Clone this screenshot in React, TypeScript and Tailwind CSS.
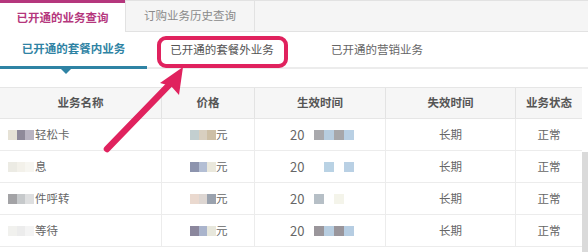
import React from 'react'

const font = { fontFamily: '"Noto Sans CJK SC", "Noto Sans", sans-serif' }

type Row = {
  name: string
  nameBlur: string[]
  priceBlur: string[]
  dateBlur: string[]
}

const rows: Row[] = [
  { name: '轻松卡', nameBlur: ['#e6e2d6', '#8f8a9a', '#b9b4c2'], priceBlur: ['#c3cfd0', '#d8cfc0', '#cdbfa6'], dateBlur: ['#a9a9ad', '#b7cde0', '#a7a7aa', '#b9d0e4'] },
  { name: '息', nameBlur: ['#ecebe4', '#f3f1ea', '#f7f6f1'], priceBlur: ['#8d94ae', '#b3bed4', '#eae8dc'], dateBlur: ['#ffffff', '#b9d2e4', '#ffffff', '#b9d0e4'] },
  { name: '件呼转', nameBlur: ['#a3a3a6', '#c6c9cb', '#dedfe0'], priceBlur: ['#ead9cf', '#ddd6d2', '#9aa2ae'], dateBlur: ['#b6bfc6', '#ffffff', '#f4f4ea', '#ffffff'] },
  { name: '等待', nameBlur: ['#f1f1ee', '#ececec', '#f4f4f4'], priceBlur: ['#8b879d', '#aab4cc', '#e7e7dc'], dateBlur: ['#9a969b', '#b7cde0', '#99959b', '#b6cde2'] },
]

function Blur({ colors, w }: { colors: string[]; w: number }) {
  return (
    <span className="inline-flex h-[10px] blur-[0.6px]" style={{ width: w }}>
      {colors.map((c, i) => (
        <span key={i} className="flex-1 h-full" style={{ background: c }} />
      ))}
    </span>
  )
}

export default function App() {
  return (
    <div className="relative w-[588px] h-[252px] overflow-hidden bg-white text-[11.5px]" style={font}>
      {/* Top tabs */}
      <div className="flex h-[32px] bg-[#f5f5f5] border-b border-[#e2e2e2]">
        <div className="w-[125px] h-[32px] bg-white border-t-[3px] border-[#b5377d] flex items-center justify-center text-[#b5377d] font-bold">
          已开通的业务查询
        </div>
        <div className="w-[130px] flex items-center justify-center text-[#8a8a8a] border-x border-t border-[#e2e2e2]">
          订购业务历史查询
        </div>
        <div className="flex-1 border-t border-[#e2e2e2]" />
      </div>

      {/* Sub tabs */}
      <div className="relative flex h-[37px] border-b-[2px] border-[#ececec]">
        <div className="relative w-[147px] flex items-center justify-center text-[#2f83a4] font-bold border-b-[3px] border-[#2f83a4] -mb-[2px]">
          已开通的套餐内业务
          <span className="absolute left-[60px] -bottom-[8px] w-0 h-0 border-x-[6px] border-x-transparent border-t-[6px] border-t-[#2f83a4]" />
        </div>
        <div className="relative w-[150px] flex items-center justify-center text-[#555]">
          已开通的套餐外业务
          <span className="absolute left-[10px] top-[4px] w-[131px] h-[32px] rounded-[9px] border-[4px] border-[#e0225e]" />
        </div>
        <div className="w-[160px] flex items-center justify-center text-[#666]">已开通的营销业务</div>
      </div>

      {/* Table */}
      <div className="mt-[18px] mr-[6px]">
        <div className="flex h-[32px] bg-[#f6f6f6] border-y border-[#e6e6e6] text-[#555] font-bold">
          <div className="w-[162px] flex items-center justify-center border-r border-[#e3e3e3]">业务名称</div>
          <div className="w-[93px] flex items-center justify-center border-r border-[#e3e3e3]">价格</div>
          <div className="w-[131px] flex items-center justify-center border-r border-[#e3e3e3]">生效时间</div>
          <div className="w-[130px] flex items-center justify-center border-r border-[#e3e3e3]">失效时间</div>
          <div className="flex-1 flex items-center justify-center">业务状态</div>
        </div>
        {rows.map((r, i) => (
          <div key={i} className="flex h-[32px] border-b border-[#ececec] text-[#666]">
            <div className="w-[162px] flex items-center pl-[8px] gap-[1px] border-r border-[#ececec]">
              <Blur colors={r.nameBlur} w={26} />
              <span>{r.name}</span>
            </div>
            <div className="w-[93px] flex items-center pl-[28px] border-r border-[#ececec]">
              <Blur colors={r.priceBlur} w={26} />
              <span>元</span>
            </div>
            <div className="w-[131px] flex items-center pl-[35px] gap-[10px] border-r border-[#ececec]">
              <span className="text-[13px]">20</span>
              <Blur colors={r.dateBlur} w={40} />
            </div>
            <div className="w-[130px] flex items-center justify-center border-r border-[#ececec]">长期</div>
            <div className="flex-1 flex items-center justify-center">正常</div>
          </div>
        ))}
      </div>

      {/* Scrollbar */}
      <div className="absolute right-0 top-[152px] w-[6px] h-[100px] bg-[#dadada]" />

      {/* Pointer arrow */}
      <svg className="absolute left-0 top-0 pointer-events-none" width="588" height="252">
        <line x1="107" y1="149" x2="170" y2="84" stroke="#e0225e" strokeWidth="6.5" strokeLinecap="round" />
        <polygon points="183,67 179,95 171,86 160,83" fill="#e0225e" />
      </svg>
    </div>
  )
}
